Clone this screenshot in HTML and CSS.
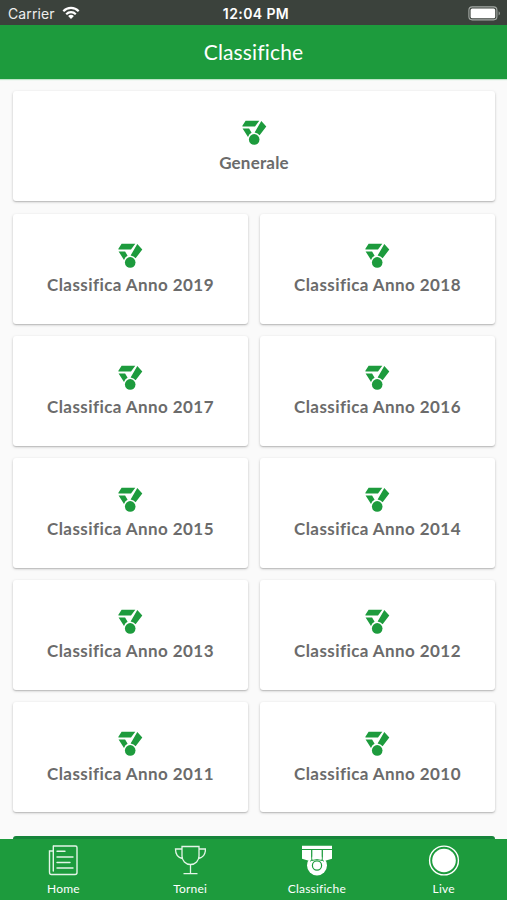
FILE: index.html
```html
<!DOCTYPE html>
<html lang="it">
<head>
<meta charset="utf-8">
<title>Classifiche</title>
<link rel="stylesheet" href="styles.css">
</head>
<body>
<svg class="defs" aria-hidden="true">
  <symbol id="medal" viewBox="0 0 25 25">
    <path d="M3.600 .8H17.300L13 6.600H.4V5.800ZM19.300 .9 24.300 6.600 17.600 15.300Q15.800 13.200 12.600 12.600ZM.6 8.400H7.100L9.600 12.700Q7.200 13.800 6 16.900Z"/>
    <circle cx="12.2" cy="19.4" r="5.3"/>
  </symbol>
</svg>
<div class="app">
  <header>
    <div class="status">
      <div class="carrier"><span>Carrier</span>
        <svg width="18" height="14" viewBox="0 0 18 14"><g fill="none" stroke="#fff" stroke-width="2.2"><path d="M1.3 5.2C5.6 .7 12.4 .7 16.7 5.2"/><path d="M4.2 8.2C6.9 5.5 11.1 5.5 13.8 8.2"/></g><path fill="#fff" d="M6.1 10Q9 7.7 11.9 10L9 13Z"/></svg>
      </div>
      <time>12:04 PM</time>
      <svg class="battery" width="33" height="15" viewBox="0 0 33 15"><rect x=".9" y=".9" width="28" height="13" rx="3.3" fill="none" stroke="#a5aaa6" stroke-width="1.1"/><rect x="2.6" y="2.6" width="24.6" height="9.6" rx="1.5" fill="#fff"/><path d="M30.7 5.2Q33 7.4 30.7 9.6Z" fill="#a5aaa6"/></svg>
    </div>
    <h1>Classifiche</h1>
  </header>
  <main>
    <a class="card wide"><svg><use href="#medal"/></svg><span class="general">Generale</span></a>
    <a class="card"><svg><use href="#medal"/></svg><span>Classifica Anno 2019</span></a>
    <a class="card"><svg><use href="#medal"/></svg><span>Classifica Anno 2018</span></a>
    <a class="card"><svg><use href="#medal"/></svg><span>Classifica Anno 2017</span></a>
    <a class="card"><svg><use href="#medal"/></svg><span>Classifica Anno 2016</span></a>
    <a class="card"><svg><use href="#medal"/></svg><span>Classifica Anno 2015</span></a>
    <a class="card"><svg><use href="#medal"/></svg><span>Classifica Anno 2014</span></a>
    <a class="card"><svg><use href="#medal"/></svg><span>Classifica Anno 2013</span></a>
    <a class="card"><svg><use href="#medal"/></svg><span>Classifica Anno 2012</span></a>
    <a class="card"><svg><use href="#medal"/></svg><span>Classifica Anno 2011</span></a>
    <a class="card"><svg><use href="#medal"/></svg><span>Classifica Anno 2010</span></a>
    <div class="more"></div>
  </main>
  <nav>
    <a><svg viewBox="0 0 32 32" class="line"><path d="M6.500 1H28.500Q30 1 30 2.500V27.500Q30 29.500 28 29.500H4.500Q2.500 29.500 2.500 27V6H6M6.300 1V26"/><path d="M10 6.200H18M10 12H26M10 17.500H23M10 23H26"/></svg><span>Home</span></a>
    <a><svg viewBox="0 0 32 32" class="line thin"><path d="M8 1.500H25V11C25 15.500 21.500 19.500 16.500 19.500S8 15.500 8 11ZM8 4H1.500C1.500 8.500 3.500 12.500 8.300 13.500M25 4H31.500C31.500 8.500 29.500 12.500 24.700 13.500M16.500 19.500V28.500M10 28.700H23"/></svg><span>Tornei</span></a>
    <a><svg viewBox="0 0 32 32"><path fill="#fff" d="M1 .8H31V4H1ZM1 5H10.300V16.500L1 13.800ZM11.200 5H20.800V16H11.200ZM21.700 5H31V13.800L21.700 16.500Z"/><circle cx="16" cy="20.500" r="10" fill="#fff"/><path d="M10.700 5V15.500M21.300 5V15.500M9 16.300 11.500 14.800M23 16.300 20.500 14.800M11 15.500Q16 13.500 21 15.500" fill="none" stroke="#1d9b3d" stroke-width=".9"/><circle cx="16" cy="20.500" r="4.600" fill="#fff" stroke="#1d9b3d" stroke-width="1.200"/></svg><span>Classifiche</span></a>
    <a><svg viewBox="0 0 32 32"><circle cx="16" cy="15.500" r="14.400" fill="none" stroke="#fff" stroke-width="1.400"/><circle cx="16" cy="15.500" r="11.800" fill="#fff"/></svg><span>Live</span></a>
  </nav>
</div>
</body>
</html>
```
FILE: styles.css
```css
* { box-sizing: border-box; }
body { margin: 0; background: #fafafa; font-family: Lato, sans-serif; }
.defs { display: none; }
.app { width: 507px; height: 900px; display: flex; flex-direction: column; overflow: hidden; }
header { flex: none; height: 79px; background: #1d9b3d; color: #fff; box-shadow: 0 1px 1px #bfe5c8; }
.status { height: 25px; padding: 1px 6px 0 8px; background: #3b423c; display: grid; grid-template-columns: 1fr auto 1fr; align-items: center; font-family: Inter, sans-serif; }
.carrier { display: flex; align-items: center; gap: 7px; font-size: 14px; letter-spacing: .1px; color: #eee; }
time { font-size: 14px; font-weight: 600; letter-spacing: .4px; padding-left: 3px; }
.battery { justify-self: end; }
h1 { margin: 0; height: 53px; font-size: 21px; font-weight: 400; line-height: 53px; letter-spacing: .15px; text-align: center; }
main { flex: 1; min-height: 0; overflow: hidden; padding: 12.4px 12px 0 13px; display: grid; grid-template-columns: 235px 235px; column-gap: 12px; row-gap: 12.15px; grid-auto-rows: 110px; }
.card { display: flex; flex-direction: column; align-items: center; padding-top: 29px; background: #fff; border-radius: 3px; box-shadow: 0 1px 3px rgba(0,0,0,.2), 0 1px 1px rgba(0,0,0,.12); color: #6b6b6b; }
.wide { grid-column: 1 / -1; }
.card svg { width: 25px; height: 25px; fill: #1d9b3d; }
.card span { margin-top: 5.5px; font-size: 17px; line-height: 24px; font-weight: 700; letter-spacing: .42px; white-space: nowrap; }
.card .general { letter-spacing: .2px; }
.more { grid-column: 1 / -1; margin-top: 11.500px; background: #16843a; border-radius: 3px; height: 20px; }
nav { flex: none; height: 61px; display: grid; grid-template-columns: repeat(4, 1fr); background: #1d9b3d; color: #fff; }
nav a { display: flex; flex-direction: column; align-items: center; padding-top: 6px; }
nav svg { width: 32px; height: 32px; }
nav span { margin-top: 4px; font-size: 12px; line-height: 16px; letter-spacing: .2px; }
.line { fill: none; stroke: #e3f5e7; stroke-width: 1.4; stroke-linecap: round; }
.thin { stroke-width: 1.3; }
```
